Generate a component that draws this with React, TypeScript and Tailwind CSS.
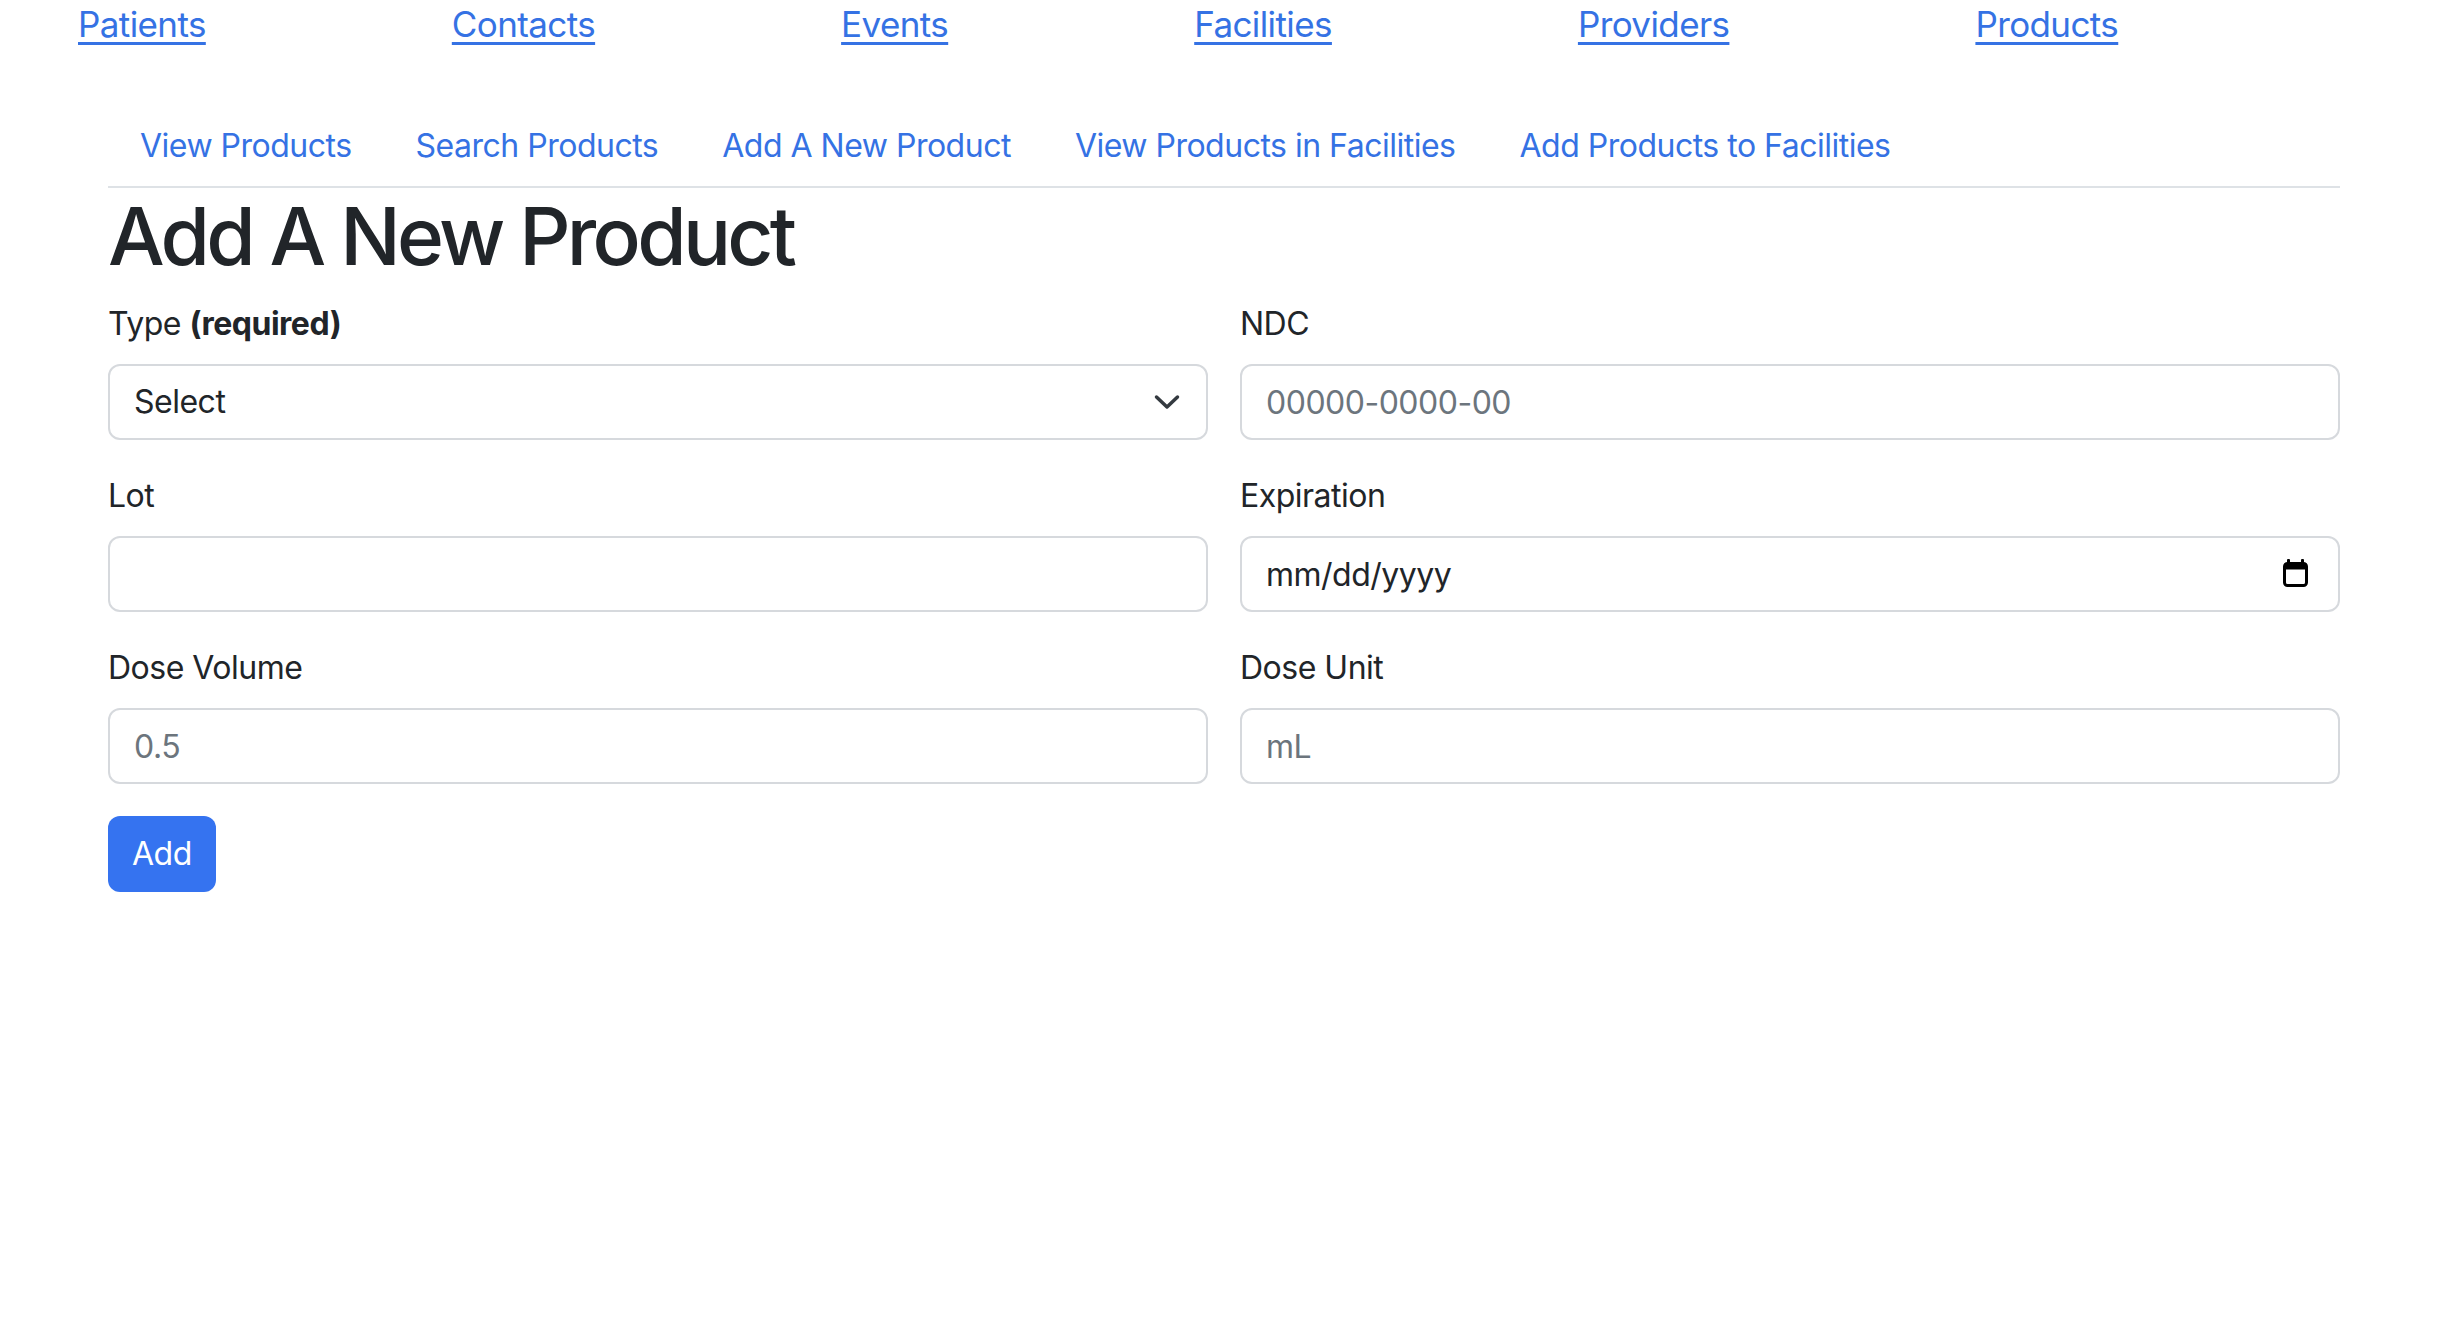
import React from 'react'

const topLinks = ['Patients', 'Contacts', 'Events', 'Facilities', 'Providers', 'Products']
const subLinks = [
  'View Products',
  'Search Products',
  'Add A New Product',
  'View Products in Facilities',
  'Add Products to Facilities',
]

const font = { fontFamily: 'Inter, "Noto Sans", sans-serif' }

function Label({ children }: { children: React.ReactNode }) {
  return <label className="block mb-[16px] text-[32px] leading-[48px] text-[#212529]">{children}</label>
}

const boxCls =
  'block w-full h-[76px] px-[24px] rounded-[12px] border-2 border-[#d6d9dd] bg-white text-[32px] leading-[48px] tracking-[-0.5px] text-[#212529] placeholder:text-[#6c757d] outline-none'

function ChevronDown() {
  return (
    <svg width="26" height="16" viewBox="0 0 26 16" fill="none" stroke="#343a40" strokeWidth="3.5" strokeLinecap="round" strokeLinejoin="round">
      <polyline points="2.5,3 13,13 23.5,3" />
    </svg>
  )
}

function CalendarIcon() {
  return (
    <svg width="25" height="28" viewBox="0 0 25 28" fill="none">
      <rect x="4" y="0" width="3" height="5" rx="1" fill="#000" />
      <rect x="18" y="0" width="3" height="5" rx="1" fill="#000" />
      <rect x="1.5" y="4.5" width="22" height="22" rx="3" stroke="#000" strokeWidth="3" />
      <rect x="1.5" y="4.5" width="22" height="6" fill="#000" />
    </svg>
  )
}

export default function App() {
  return (
    <div className="min-h-screen bg-white tracking-[-0.5px]" style={font}>
      {/* top nav */}
      <nav className="flex gap-[246px] pl-[78px] h-[54px]">
        {topLinks.map(l => (
          <a
            key={l}
            href="#"
            className="text-[35px] leading-[48px] tracking-[-0.6px] text-[#3572e4] underline decoration-[3px] underline-offset-[5px]"
          >
            {l}
          </a>
        ))}
      </nav>

      <div className="ml-[108px] w-[2232px] pt-[52px]">
        {/* sub nav */}
        <ul className="flex border-b-2 border-[#dee2e6]">
          {subLinks.map(l => (
            <li key={l}>
              <a href="#" className="block px-[32px] py-[16px] text-[32px] leading-[48px] text-[#3572e4]">
                {l}
              </a>
            </li>
          ))}
        </ul>

        <h1 className="mb-[16px] text-[80px] leading-[96px] font-medium tracking-[-3.7px] text-[#212529]">
          Add A New Product
        </h1>

        <form className="grid grid-cols-2 gap-x-[32px] gap-y-[32px]" onSubmit={e => e.preventDefault()}>
          <div>
            <Label>
              Type <b className="font-bold">(required)</b>
            </Label>
            <div className="relative">
              <select className={`${boxCls} appearance-none`} defaultValue="">
                <option value="">Select</option>
              </select>
              <span className="absolute right-[28px] top-[30px] pointer-events-none">
                <ChevronDown />
              </span>
            </div>
          </div>
          <div>
            <Label>NDC</Label>
            <input className={boxCls} placeholder="00000-0000-00" />
          </div>

          <div>
            <Label>Lot</Label>
            <input className={boxCls} />
          </div>
          <div>
            <Label>Expiration</Label>
            <div className="relative">
              <input className={`${boxCls} placeholder:text-[#212529]`} placeholder="mm/dd/yyyy" />
              <span className="absolute right-[32px] top-[23px] pointer-events-none">
                <CalendarIcon />
              </span>
            </div>
          </div>

          <div>
            <Label>Dose Volume</Label>
            <input className={boxCls} placeholder="0.5" />
          </div>
          <div>
            <Label>Dose Unit</Label>
            <input className={boxCls} placeholder="mL" />
          </div>

          <div>
            <button
              type="submit"
              className="h-[76px] px-[24px] rounded-[12px] bg-[#3573f0] text-white text-[32px] leading-[48px]"
            >
              Add
            </button>
          </div>
        </form>
      </div>
    </div>
  )
}
